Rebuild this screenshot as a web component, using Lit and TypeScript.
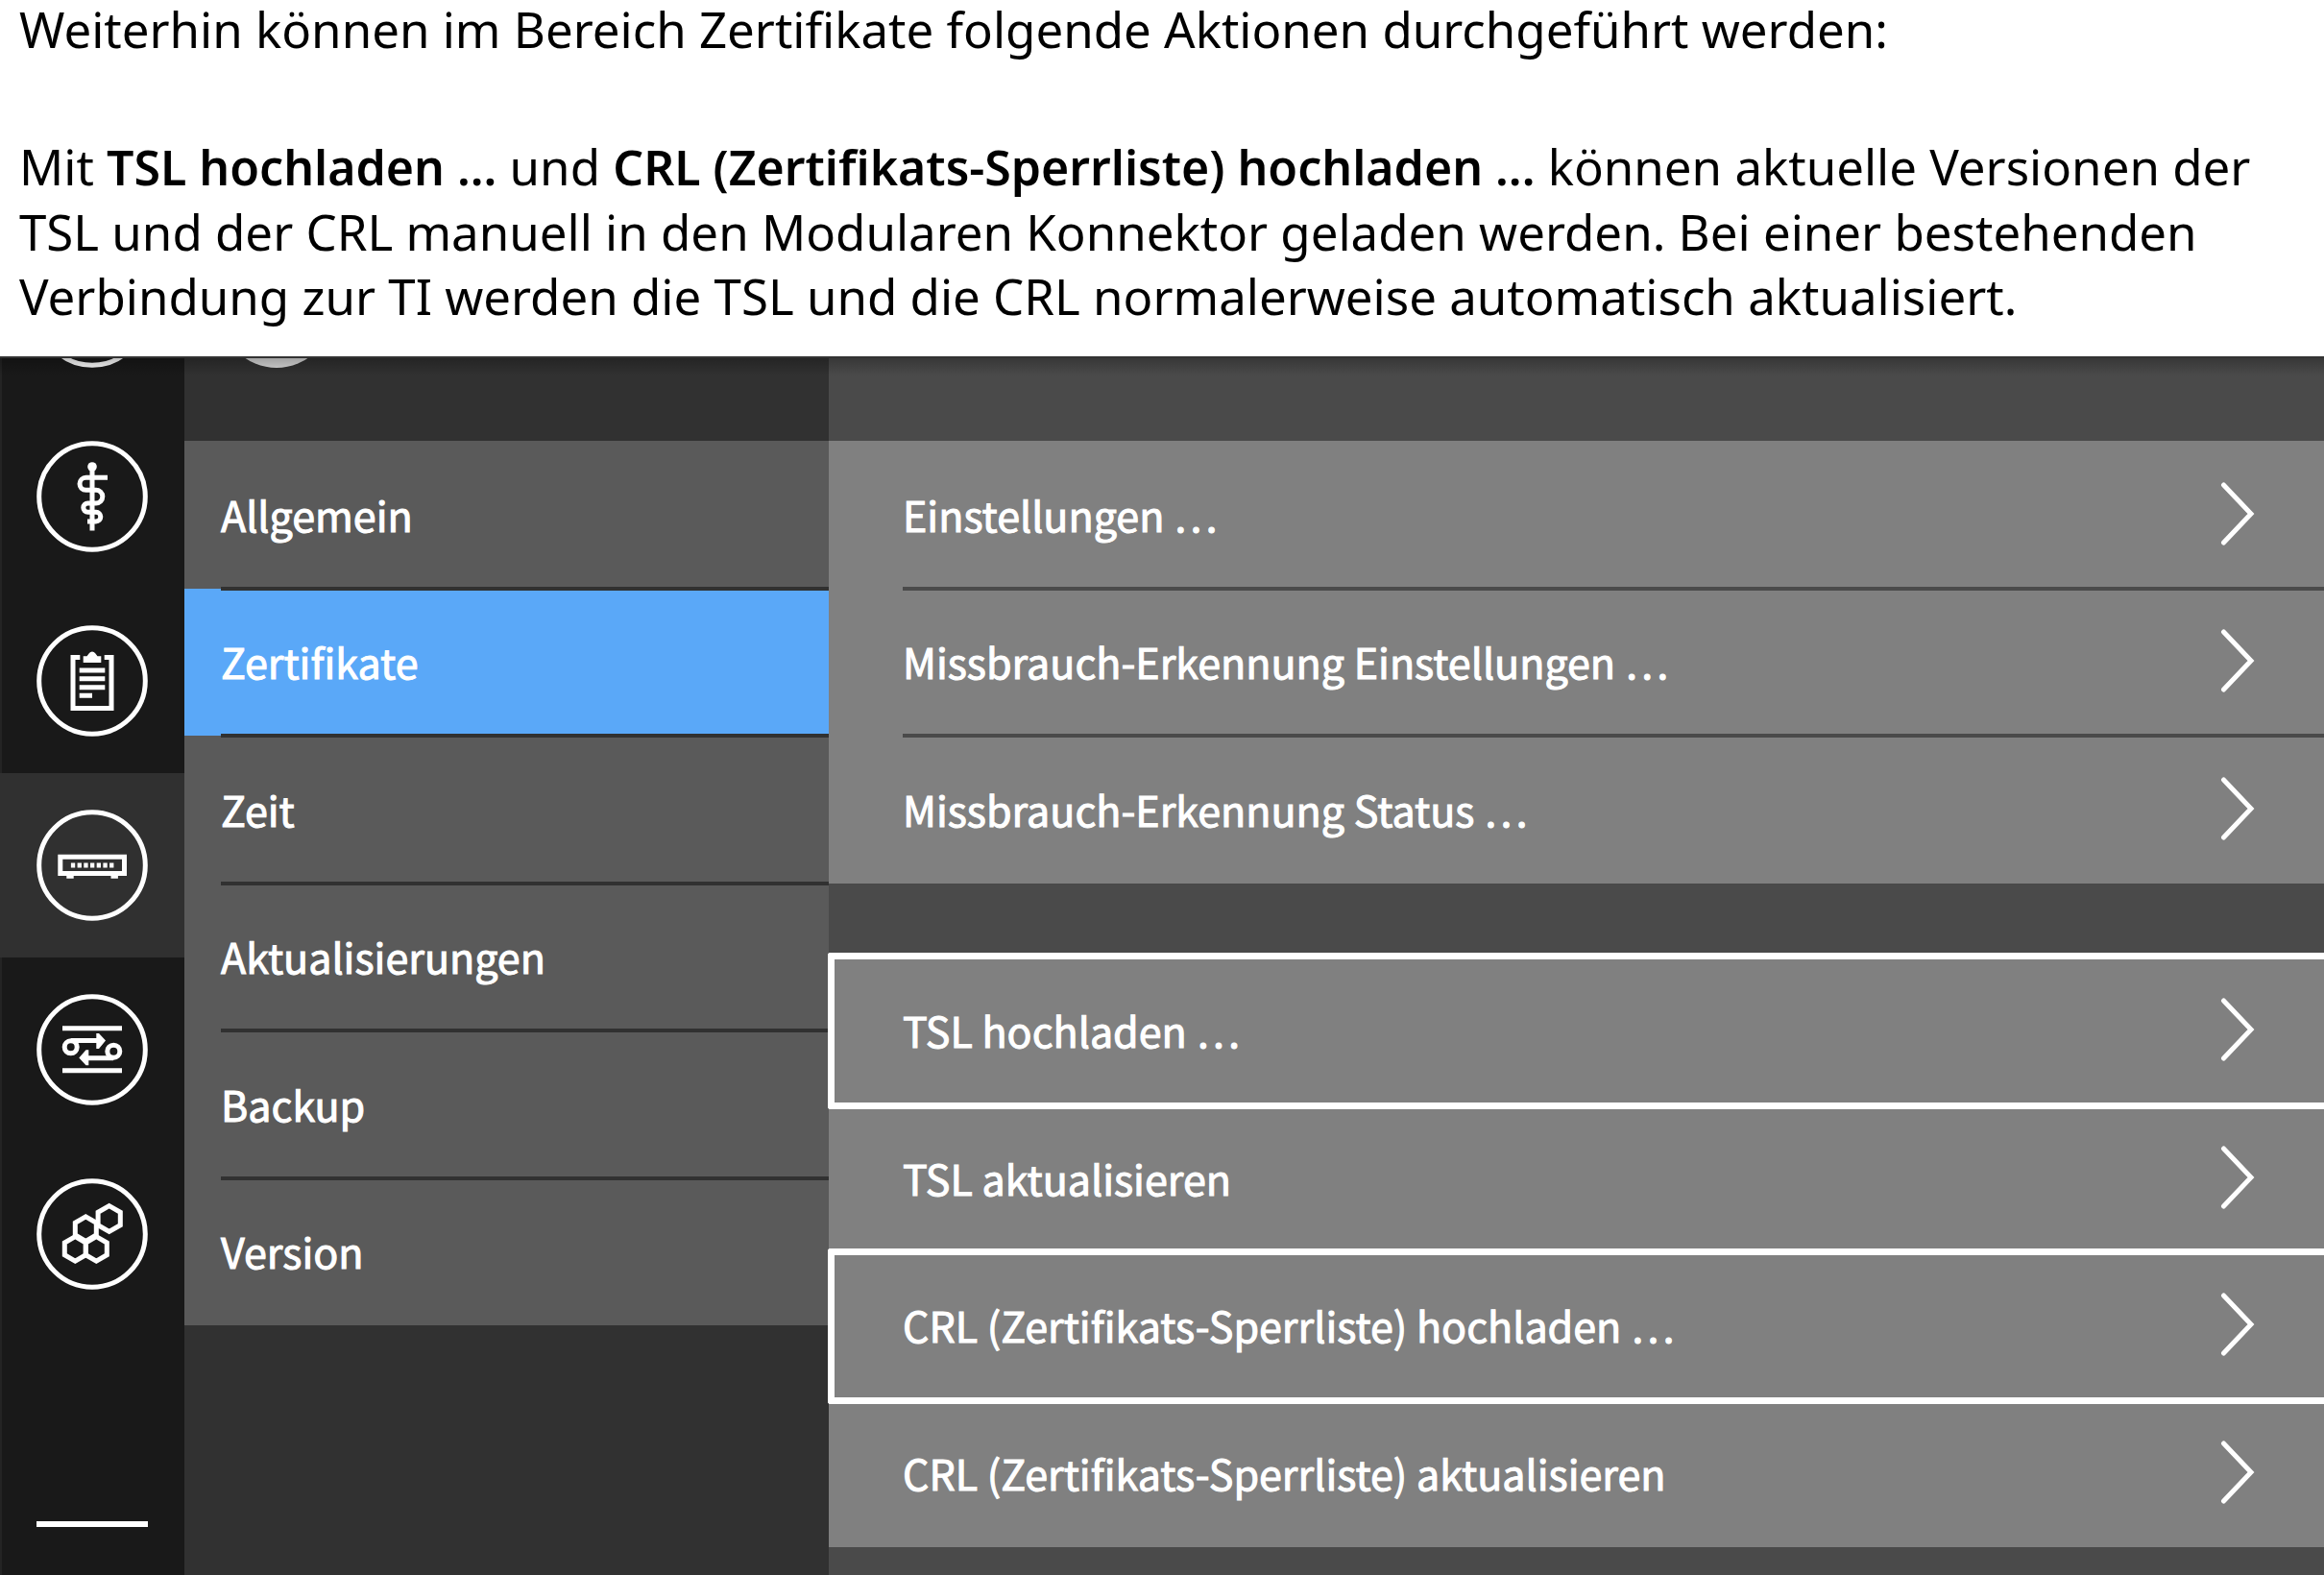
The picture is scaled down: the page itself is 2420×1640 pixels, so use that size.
import { LitElement, html, css, svg, SVGTemplateResult } from "lit";
import { customElement, property, state } from "lit/decorators.js";
import { classMap } from "lit/directives/class-map.js";

const hexagon = (cx: number, cy: number, r: number) => {
  const w = r * 0.866;
  return svg`<polygon points="${cx},${cy - r} ${cx + w},${cy - r / 2} ${cx + w},${cy + r / 2} ${cx},${cy + r} ${cx - w},${cy + r / 2} ${cx - w},${cy - r / 2}" />`;
};

const icons: Record<string, SVGTemplateResult> = {
  none: svg``,
  practice: svg`
    <circle class="solid" cx="58" cy="27" r="4.8" />
    <path d="M58 27V93.5M74 38.3H51.5a6.5 6.5 0 0 0 0 13H62a6.8 6.8 0 0 1 0 13.6H53.5a4.7 4.7 0 0 0 0 9.4H62a4.8 4.8 0 0 1 0 9.6H53" />`,
  protocol: svg`
    <path d="M45.3 33.5H38v53h40v-53h-7.3M44.7 47H71.3M44.7 55.8H71.3M44.7 64.7H71.3M44.7 73.3H58" />
    <path class="solid" d="M48.7 39V32.3H52.5L55 29a3.6 3.6 0 0 1 6 0L63.5 32.3H67.3V39z" />`,
  system: svg`
    <path d="M24.8 49.2H91.5V66.5H24.8z" />
    <path d="M35.9 58H80.5" stroke-dasharray="4.3 2.4" />
    <path class="solid" d="M31.3 68h7.4v3.7h-7.4zM77.5 68h7.4v3.7h-7.4z" />`,
  network: svg`
    <path d="M27 35.7H89M27 79.7H89M36 48.5H65M80 66.7H51" />
    <circle cx="35.7" cy="55.3" r="6.5" />
    <circle cx="80.3" cy="59.7" r="6.5" />
    <path class="solid" d="M62.3 41H65L72 48.5L65 57H62.3zM54.3 58.3H51.5L44.3 66.5L51.5 74.3H54.3z" />`,
  modules: svg`${hexagon(75.7, 42, 13.4)}${hexagon(51.3, 52.6, 12.7)}${hexagon(40.3, 73.4, 12.7)}${hexagon(62.3, 73.4, 12.7)}`,
};

@customElement("rail-icon")
class RailIcon extends LitElement {
  @property() name = "none";

  static styles = css`
    :host { display: block; }
    .icon { display: block; width: 116px; height: 116px; fill: none; stroke: #fff; stroke-width: 5; }
    .solid { fill: #fff; stroke: none; }
  `;

  render() {
    return html`<svg class="icon" viewBox="0 0 116 116" aria-hidden="true">
      <circle cx="58" cy="58" r="55.3" />${icons[this.name]}
    </svg>`;
  }
}

interface Action { label: string; marked?: boolean; }

const groups: Action[][] = [
  [
    { label: "Einstellungen …" },
    { label: "Missbrauch-Erkennung Einstellungen …" },
    { label: "Missbrauch-Erkennung Status …" },
  ],
  [
    { label: "TSL hochladen …", marked: true },
    { label: "TSL aktualisieren" },
    { label: "CRL (Zertifikats-Sperrliste) hochladen …", marked: true },
    { label: "CRL (Zertifikats-Sperrliste) aktualisieren" },
  ],
];

const sections = ["Allgemein", "Zertifikate", "Zeit", "Aktualisierungen", "Backup", "Version"];

const areas = [
  { icon: "practice", label: "Praxis" },
  { icon: "protocol", label: "Protokoll" },
  { icon: "system", label: "System" },
  { icon: "network", label: "Netzwerk" },
  { icon: "modules", label: "Module" },
];

@customElement("app-root")
class AppRoot extends LitElement {
  @state() private area = "system";
  @state() private section = "Zertifikate";

  static styles = css`
    :host {
      display: flex;
      flex-direction: column;
      min-height: 100vh;
      background: #fff;
    }
    * { box-sizing: border-box; }
    button {
      border: 0;
      margin: 0;
      padding: 0;
      background: none;
      color: inherit;
      font: inherit;
      text-align: left;
      cursor: pointer;
    }
    .intro {
      padding: 0 20px 29px;
      color: #000;
      font: 51px/67px "Noto Sans", sans-serif;
    }
    .intro p { margin: 0; }
    .intro .lead { line-height: 60px; margin-bottom: 80px; }
    .intro b { font-size: 50px; font-weight: 600; }
    .app {
      position: relative;
      flex: 1;
      display: grid;
      grid-template-columns: 192px 671px 1fr;
      color: #fff;
      font: 43px/64px "Noto Sans CJK SC", sans-serif;
      -webkit-text-stroke: 1px #fff;
    }
    .app::after {
      content: "";
      position: absolute;
      inset: 0 0 auto;
      height: 18px;
      border-top: 2px solid #333;
      background: linear-gradient(rgba(0, 0, 0, 0.25), transparent);
      pointer-events: none;
    }
    .rail {
      display: flex;
      flex-direction: column;
      background: #191919;
      border-left: 2px solid #242424;
    }
    .cut {
      display: flex;
      align-items: flex-end;
      height: 50px;
      overflow: hidden;
      padding: 0 0 38px 36px;
    }
    .area { height: 192px; padding-left: 36px; }
    .area.current { margin-left: -2px; padding-left: 38px; background: #303030; }
    .rule {
      width: 116px;
      height: 6px;
      margin: auto 0 50px 36px;
      border: 0;
      background: #fff;
    }
    .sections { background: #313131; }
    .head {
      display: flex;
      align-items: flex-end;
      height: 88px;
      overflow: hidden;
      padding: 0 0 76px 38px;
    }
    .avatar { flex: none; width: 116px; height: 116px; border-radius: 50%; background: #dadada; }
    .list { display: grid; grid-auto-rows: 1fr; }
    .list.six { min-height: 921px; }
    .list.three { min-height: 461px; }
    .list.four { min-height: 615px; }
    .section, .action { position: relative; display: flex; align-items: center; padding-bottom: 2px; }
    .section { padding-left: 38px; background: #5a5a5a; }
    .section.current { background: #5aa8f8; }
    .section + .section::before, .action + .action::before {
      content: "";
      position: absolute;
      z-index: 1;
      top: -2px;
      right: 0;
      height: 4px;
    }
    .section + .section::before { left: 38px; background: #313131; }
    .action + .action::before { left: 77px; background: #4a4a4a; }
    .actions {
      display: flex;
      flex-direction: column;
      gap: 76px;
      padding-top: 88px;
      background: #4a4a4a;
    }
    .action {
      justify-content: space-between;
      padding-left: 77px;
      padding-right: 72px;
      background: #808080;
    }
    .action.marked::after {
      content: "";
      position: absolute;
      z-index: 2;
      inset: -4px 0 -5px -1px;
      border: 7px solid #fff;
      border-right: 0;
      border-radius: 3px 0 0 3px;
    }
    .chevron {
      width: 36px;
      height: 68px;
      fill: none;
      stroke: #fff;
      stroke-width: 5;
      stroke-linecap: round;
    }
  `;

  render() {
    return html`
      <section class="intro">
        <p class="lead">Weiterhin können im Bereich Zertifikate folgende Aktionen durchgeführt werden:</p>
        <p>
          Mit <b>TSL hochladen ...</b> und <b>CRL (Zertifikats-Sperrliste) hochladen ...</b> können aktuelle Versionen der
          TSL und der CRL manuell in den Modularen Konnektor geladen werden. Bei einer bestehenden
          Verbindung zur TI werden die TSL und die CRL normalerweise automatisch aktualisiert.
        </p>
      </section>
      <main class="app">
        <nav class="rail">
          <div class="cut"><rail-icon></rail-icon></div>
          ${areas.map(
            (a) => html`<button
              class=${classMap({ area: true, current: a.icon === this.area })}
              aria-label=${a.label}
              @click=${() => (this.area = a.icon)}
            ><rail-icon name=${a.icon}></rail-icon></button>`
          )}
          <hr class="rule" />
        </nav>
        <nav class="sections">
          <div class="head"><span class="avatar"></span></div>
          <div class="list six">
            ${sections.map(
              (s) => html`<button
                class=${classMap({ section: true, current: s === this.section })}
                @click=${() => (this.section = s)}
              >${s}</button>`
            )}
          </div>
        </nav>
        <div class="actions">
          ${groups.map(
            (g) => html`<div class="list ${g.length === 3 ? "three" : "four"}">
              ${g.map(
                (a) => html`<button class=${classMap({ action: true, marked: !!a.marked })}>
                  <span>${a.label}</span>
                  <svg class="chevron" viewBox="0 0 36 68" aria-hidden="true"><path d="M3.5 4L32 34L3.5 64" /></svg>
                </button>`
              )}
            </div>`
          )}
        </div>
      </main>
    `;
  }
}
